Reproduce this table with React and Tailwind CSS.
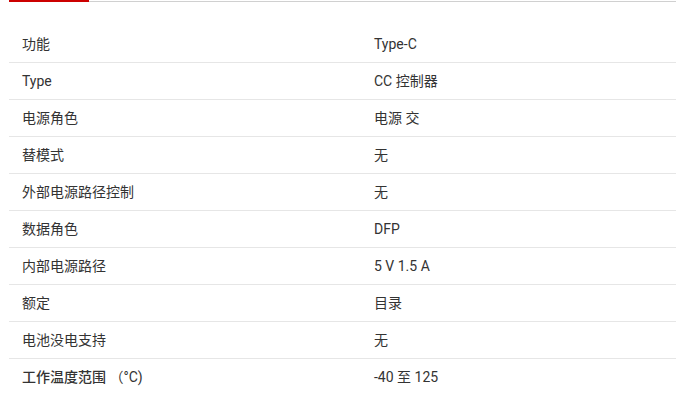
import React from "react";

const rows = [
  ["功能", "Type-C"],
  ["Type", "CC 控制器"],
  ["电源角色", "电源 交"],
  ["替模式", "无"],
  ["外部电源路径控制", "无"],
  ["数据角色", "DFP"],
  ["内部电源路径", "5 V 1.5 A"],
  ["额定", "目录"],
  ["电池没电支持", "无"],
];

export default function App() {
  return (
    <div
      className="w-[683px] h-[393px] bg-white overflow-hidden text-[14px] text-[#333]"
      style={{ fontFamily: 'Roboto, "Noto Sans CJK SC", sans-serif' }}
    >
      <div className="flex items-end ml-[9px] mr-[7px] h-[2px]">
        <div className="w-[80px] h-[2px] bg-[#cc0000]" />
        <div className="flex-1 h-px bg-[#d0d0d0]" />
      </div>
      <div className="mt-6 mx-[9px] w-[667px]">
        {rows.map(([k, v], i) => (
          <div
            key={i}
            className="grid grid-cols-[352px_1fr] h-[37px] items-center border-b border-[#e6e6e6]"
          >
            <div className="pl-[13px]">{k}</div>
            <div className="pl-[13px]">{v}</div>
          </div>
        ))}
        <div className="grid grid-cols-[352px_1fr] h-[37px] items-center">
          <div className="pl-[13px]">
            <span className="font-medium">工作温度范围</span> （°C)
          </div>
          <div className="pl-[13px]">-40 至 125</div>
        </div>
      </div>
    </div>
  );
}
